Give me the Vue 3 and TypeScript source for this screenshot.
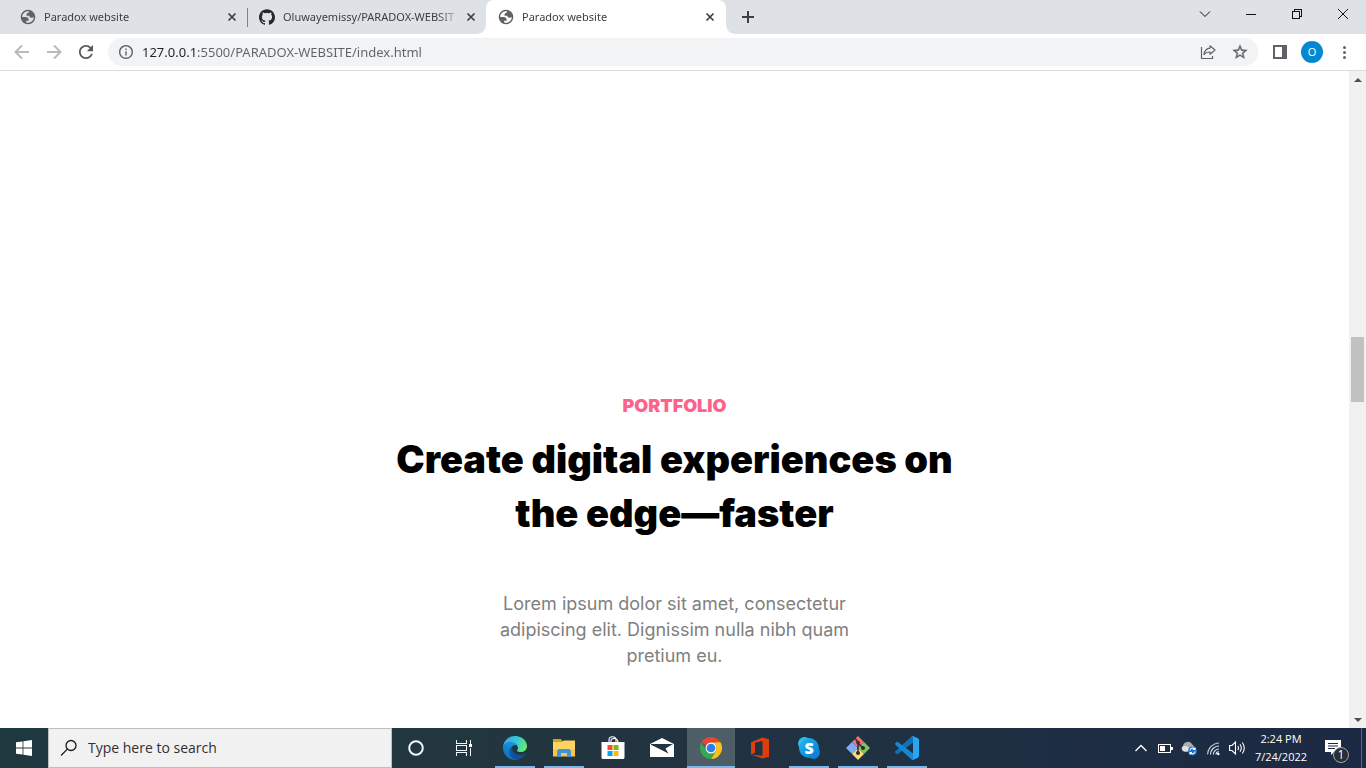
<script setup lang="ts">
import { ref } from 'vue'

interface BrowserTab {
  id: number
  title: string
  icon: 'globe' | 'github'
  active: boolean
}

interface TaskApp {
  id: string
  label: string
  running: boolean
  focused: boolean
}

const tabs: BrowserTab[] = [
  { id: 1, title: 'Paradox website', icon: 'globe', active: false },
  { id: 2, title: 'Oluwayemissy/PARADOX-WEBSIT', icon: 'github', active: false },
  { id: 3, title: 'Paradox website', icon: 'globe', active: true },
]

const apps: TaskApp[] = [
  { id: 'edge', label: 'Microsoft Edge', running: true, focused: false },
  { id: 'files', label: 'File Explorer', running: true, focused: false },
  { id: 'store', label: 'Microsoft Store', running: false, focused: false },
  { id: 'mail', label: 'Mail', running: false, focused: false },
  { id: 'chrome', label: 'Google Chrome', running: true, focused: true },
  { id: 'office', label: 'Office', running: false, focused: false },
  { id: 'skype', label: 'Skype', running: true, focused: false },
  { id: 'git', label: 'Git Bash', running: true, focused: false },
  { id: 'vscode', label: 'Visual Studio Code', running: true, focused: false },
]

const address = ref('127.0.0.1:5500/PARADOX-WEBSITE/index.html')
const query = ref('')
const scroll = { before: 249, thumb: 65, after: 309 }
</script>

<template>
  <div class="desktop">
    <header class="tabstrip">
      <div class="tabs">
        <div v-for="tab in tabs" :key="tab.id" class="tab" :class="{ active: tab.active }">
          <button type="button" class="tab-main">
            <svg v-if="tab.icon === 'globe'" class="favicon" viewBox="1 1 22 22" aria-hidden="true">
              <path fill="#5f6368" fill-rule="evenodd" d="M2 12C2 6.480 6.480 2 12 2s10 4.480 10 10-4.480 10-10 10S2 17.520 2 12zm2 0h4.400c3.407.022 4.922 1.730 4.543 5.127H9.488v2.470a8.004 8.004 0 0 0 10.498-8.083C19.327 12.504 18.332 13 17 13c-2.137 0-3.206-.916-3.206-2.750h-3.748c-.274-2.728.683-4.092 2.870-4.092 0-.975.327-1.597.811-1.970A8.004 8.004 0 0 0 4 12z" />
            </svg>
            <svg v-else class="favicon" viewBox="0 0 24 24" aria-hidden="true">
              <path fill="#24292f" d="M12 .297c-6.630 0-12 5.373-12 12 0 5.303 3.438 9.800 8.205 11.385.6.113.82-.258.82-.577 0-.285-.01-1.040-.015-2.040-3.338.724-4.042-1.610-4.042-1.610C4.422 18.070 3.633 17.700 3.633 17.700c-1.087-.744.084-.729.084-.729 1.205.084 1.838 1.236 1.838 1.236 1.070 1.835 2.809 1.305 3.495.998.108-.776.417-1.305.76-1.605-2.665-.3-5.466-1.332-5.466-5.930 0-1.310.465-2.380 1.235-3.220-.135-.303-.54-1.523.105-3.176 0 0 1.005-.322 3.300 1.230.96-.267 1.980-.399 3-.405 1.020.006 2.040.138 3 .405 2.280-1.552 3.285-1.230 3.285-1.230.645 1.653.24 2.873.12 3.176.765.84 1.230 1.910 1.230 3.220 0 4.610-2.805 5.625-5.475 5.920.42.36.81 1.096.81 2.220 0 1.606-.015 2.896-.015 3.286 0 .315.21.69.825.57C20.565 22.092 24 17.592 24 12.297c0-6.627-5.373-12-12-12" />
            </svg>
            <span class="tab-title">{{ tab.title }}</span>
          </button>
          <button type="button" class="tab-close" aria-label="Close tab">
            <svg viewBox="0 0 16 16" width="16" height="16"><path d="M4.500 4.500l7 7M11.500 4.500l-7 7" stroke="#3c4043" stroke-width="1.700" /></svg>
          </button>
        </div>
        <button type="button" class="new-tab" aria-label="New tab">
          <svg viewBox="0 0 16 16" width="16" height="16"><path d="M8 2v12M2 8h12" stroke="#3c4043" stroke-width="2" /></svg>
        </button>
      </div>
      <div class="window-controls">
        <button type="button" aria-label="Search tabs">
          <svg viewBox="0 0 12 12"><path d="M1 3.500l5 5 5-5" /></svg>
        </button>
        <button type="button" aria-label="Minimize">
          <svg viewBox="0 0 12 12" shape-rendering="crispEdges"><path d="M1 6.500h10" /></svg>
        </button>
        <button type="button" aria-label="Restore">
          <svg viewBox="0 0 12 12" shape-rendering="crispEdges"><path d="M1.500 3.500h7v7h-7zM3.500 3.500v-2h7v7h-2" /></svg>
        </button>
        <button type="button" aria-label="Close window">
          <svg viewBox="0 0 12 12"><path d="M1 1l10 10M11 1L1 11" /></svg>
        </button>
      </div>
    </header>

    <nav class="toolbar" aria-label="Browser toolbar">
      <button type="button" class="tool" aria-label="Back">
        <svg viewBox="0 0 16 16" width="16" height="16" class="faint"><path d="M15 8H2M8 1.500L1.500 8 8 14.500" /></svg>
      </button>
      <button type="button" class="tool" aria-label="Forward">
        <svg viewBox="0 0 16 16" width="16" height="16" class="faint"><path d="M1 8h13M8 1.500L14.500 8 8 14.500" /></svg>
      </button>
      <button type="button" class="tool" aria-label="Reload">
        <svg viewBox="4 4 16 16" width="14" height="14"><path fill="#55585c" d="M17.650 6.350C16.200 4.900 14.210 4 12 4c-4.420 0-7.990 3.580-7.990 8s3.570 8 7.990 8c3.730 0 6.840-2.550 7.730-6h-2.080c-.82 2.330-3.040 4-5.650 4-3.310 0-6-2.690-6-6s2.690-6 6-6c1.660 0 3.140.69 4.220 1.780L13 11h7V4l-2.350 2.350z" /></svg>
      </button>
      <div class="omnibox">
        <button type="button" class="site-info" aria-label="View site information">
          <svg viewBox="2 2 20 20" width="14" height="14"><path fill="#5f6368" d="M11 7h2v2h-2zm0 4h2v6h-2zm1-9C6.480 2 2 6.480 2 12s4.480 10 10 10 10-4.480 10-10S17.520 2 12 2zm0 18c-4.410 0-8-3.590-8-8s3.590-8 8-8 8 3.590 8 8-3.590 8-8 8z" /></svg>
        </button>
        <input v-model="address" class="address" type="text" aria-label="Address" spellcheck="false" />
        <button type="button" class="tool" aria-label="Share this page">
          <svg viewBox="0 0 16 16" width="16" height="16" fill="none" stroke="#5f6368"><path d="M1.500 3v11.500h11V12" stroke-width="1.200" /><path d="M10 1.800l5 4.200-5 4.200V8C7.500 7.900 5.500 8.700 4 10.600C4.500 7 6.500 4.400 10 4.100z" stroke-width="1.200" stroke-linejoin="round" /></svg>
        </button>
        <button type="button" class="tool" aria-label="Bookmark this tab">
          <svg viewBox="1 1 22 22" width="16" height="16"><path fill="#5f6368" stroke="#5f6368" stroke-width=".5" d="M22 9.240l-7.190-.62L12 2 9.190 8.630 2 9.240l5.460 4.730L5.820 21 12 17.270 18.180 21l-1.630-7.030L22 9.240zM12 15.400l-3.760 2.270 1-4.280-3.320-2.880 4.380-.38L12 6.100l1.710 4.040 4.380.38-3.320 2.880 1 4.280L12 15.400z" /></svg>
        </button>
      </div>
      <button type="button" class="tool" aria-label="Side panel">
        <svg viewBox="0 0 14 14" width="14" height="14" shape-rendering="crispEdges"><path fill="#5f6368" fill-rule="evenodd" d="M0 0h14v14H0zM2 2v10h7V2z" /></svg>
      </button>
      <button type="button" class="tool" aria-label="Profile">
        <span class="avatar">O</span>
      </button>
      <button type="button" class="tool" aria-label="Menu">
        <svg viewBox="0 0 16 16" width="16" height="16" fill="#5f6368"><circle cx="8.500" cy="3.500" r="1.500" /><circle cx="8.500" cy="8.500" r="1.500" /><circle cx="8.500" cy="13.500" r="1.500" /></svg>
      </button>
    </nav>

    <div class="viewport">
      <main class="page">
        <section class="portfolio">
          <p class="eyebrow">PORTFOLIO</p>
          <h1>Create digital experiences on the edge—faster</h1>
          <p class="lead">Lorem ipsum dolor sit amet, consectetur adipiscing elit. Dignissim nulla nibh quam pretium eu.</p>
        </section>
      </main>
      <div class="scrollbar">
        <button type="button" class="scroll-arrow" aria-label="Scroll up">
          <svg viewBox="0 0 8 4" width="8" height="4"><path d="M0 4l4-4 4 4z" fill="#505050" /></svg>
        </button>
        <div :style="{ flexGrow: scroll.before }"></div>
        <div class="thumb" :style="{ flexGrow: scroll.thumb }"></div>
        <div :style="{ flexGrow: scroll.after }"></div>
        <button type="button" class="scroll-arrow" aria-label="Scroll down">
          <svg viewBox="0 0 8 4" width="8" height="4"><path d="M0 0l4 4 4-4z" fill="#505050" /></svg>
        </button>
      </div>
    </div>

    <footer class="taskbar">
      <button type="button" class="task" aria-label="Start">
        <svg viewBox="0 0 16 16" width="16" height="16" fill="#fff"><path d="M0 2.300l6.600-.9v6.200H0zM7.400 1.300L16 0v7.600H7.400zM0 8.400h6.600v6.200L0 13.700zM7.400 8.400H16V16l-8.600-1.300z" /></svg>
      </button>
      <label class="search">
        <svg viewBox="0 0 18 18" width="18" height="18" fill="none" stroke="#1b1b1b" stroke-width="1.300"><circle cx="11" cy="6.500" r="5" /><path d="M7.400 10.100L1 16.500" /></svg>
        <input v-model="query" type="text" placeholder="Type here to search" aria-label="Type here to search" />
      </label>
      <button type="button" class="task" aria-label="Cortana">
        <svg viewBox="0 0 16 16" width="16" height="16"><circle cx="8" cy="8" r="6.800" fill="none" stroke="#f4f6f7" stroke-width="2" /></svg>
      </button>
      <button type="button" class="task" aria-label="Task View">
        <svg viewBox="0 0 16 16" width="16" height="16" fill="none" stroke="#f4f6f7" shape-rendering="crispEdges"><path d="M.5 0v3.500h10V0M.5 16v-3.500h10V16M.5 5.500h10v5H.5zM14.500 0v4M14.500 8v8" /><path d="M13 4h3v3h-3z" fill="#fff" stroke="none" /></svg>
      </button>

      <div class="apps">
        <button v-for="app in apps" :key="app.id" type="button" class="task app" :class="{ running: app.running, focused: app.focused }" :aria-label="app.label">
          <svg v-if="app.id === 'edge'" viewBox="0 0 256 256" width="24" height="24">
            <defs>
              <linearGradient id="edgeDeep" x1="0" x2="1"><stop offset="0" stop-color="#0c59a4" /><stop offset="1" stop-color="#114a8b" /></linearGradient>
              <linearGradient id="edgeMid" x1=".7" y1="0" x2=".3" y2="1"><stop offset="0" stop-color="#1b9de2" /><stop offset=".5" stop-color="#1482cf" /><stop offset="1" stop-color="#0872c4" /></linearGradient>
              <linearGradient id="edgeTop" x1="0" y1=".3" x2="1" y2=".6"><stop offset="0" stop-color="#35a8ec" /><stop offset=".5" stop-color="#36c5d8" /><stop offset="1" stop-color="#66eb6e" /></linearGradient>
            </defs>
            <path fill="url(#edgeDeep)" d="M231 190.500c-3.400 1.800-6.900 3.400-10.500 4.700-11.500 4.300-23.600 6.500-35.900 6.500-47.300 0-88.500-32.500-88.500-74.300.1-11.400 6.400-21.900 16.400-27.300-42.800 1.800-53.800 46.400-53.800 72.500 0 73.900 68.100 81.400 82.800 81.400 7.900 0 19.800-2.300 27-4.600l1.300-.4c27.600-9.500 51-28.100 66.600-52.800 1.200-1.900.6-4.300-1.200-5.500-1.300-.8-2.900-.9-4.200-.2z" />
            <path fill="url(#edgeMid)" d="M105.700 241.400c-8.900-5.500-16.600-12.800-22.700-21.300-26.300-36-18.400-86.500 17.600-112.800 3.800-2.700 7.700-5.200 11.900-7.200 3.100-1.500 8.400-4.100 15.500-4 10.100.1 19.600 4.900 25.700 13 4 5.400 6.300 11.900 6.400 18.700 0-.2 24.500-79.600-80-79.600-43.900 0-80 41.700-80 78.200-.2 19.300 4 38.500 12.100 56 27.600 58.800 94.800 87.600 156.400 67.100-21.100 6.600-44.100 3.700-62.900-8.100z" />
            <path fill="url(#edgeTop)" d="M152.300 148.900c-.8 1-3.300 2.500-3.300 5.700 0 2.600 1.700 5.100 4.700 7.200 14.400 10 41.500 8.700 41.600 8.700 10.700 0 21.100-2.900 30.300-8.300 18.800-11 30.400-31.100 30.400-52.900.3-22.400-8-37.300-11.300-43.900C223.500 23.900 177.700 0 128 0 58 0 1 56.200 0 126.200c.5-36.500 36.800-66 80-66 3.500 0 23.500.3 42 10.100 16.300 8.600 24.900 18.900 30.800 29.200 6.200 10.700 7.300 24.100 7.300 29.500 0 5.300-2.700 13.300-7.800 19.900z" />
          </svg>
          <svg v-else-if="app.id === 'files'" viewBox="0 0 24 24" width="24" height="24">
            <path d="M1 3h8l1 2h13v4H1z" fill="#e19c12" />
            <path d="M1 6h9l1.500-1.500H23V20H1z" fill="#fcd462" />
            <path d="M1 13h22v7.500H1z" fill="#f8c545" />
            <path d="M5 21v-6l1.500-2h11l1.500 2v6h-4v-4H9v4z" fill="#3f93dc" />
          </svg>
          <svg v-else-if="app.id === 'store'" viewBox="0 0 24 24" width="24" height="24">
            <path d="M8 6.500V4.200Q8 .8 11.500.8Q15 .8 15 4.200V6.500M10 6.500V4.600Q10 2.500 13 2.500Q17 2.500 17 6.500" fill="none" stroke="#fff" stroke-width="1.100" />
            <path d="M.5 6h23v15.500q0 1.500-1.500 1.500H2Q.5 23 .5 21.500z" fill="#fff" />
            <path d="M6.500 9h5v5h-5z" fill="#f25022" /><path d="M12.500 9h5v5h-5z" fill="#7fba00" /><path d="M6.500 15h5v5h-5z" fill="#00a4ef" /><path d="M12.500 15h5v5h-5z" fill="#ffb900" />
          </svg>
          <svg v-else-if="app.id === 'mail'" viewBox="0 0 24 24" width="24" height="24">
            <path d="M0 8L12 2l12 6v13H0z" fill="#fff" />
            <path d="M1 8h22l-7.500 4.500 3 5L1 8.800z" fill="#21343f" />
          </svg>
          <svg v-else-if="app.id === 'chrome'" viewBox="0 0 48 48" width="22" height="22">
            <path d="M24 0a24 24 0 0 1 20.800 12H24a12 12 0 0 0-10.400 6L3.200 12A24 24 0 0 1 24 0z" fill="#ea4335" />
            <path d="M44.800 12A24 24 0 0 1 24 48l10.400-18A12 12 0 0 0 34.400 18L33 12z" fill="#fbc116" />
            <path d="M3.200 12A24 24 0 0 0 24 48l10.400-18a12 12 0 0 1-20.800 0z" fill="#34a853" />
            <path d="M24 12h20.800A24 24 0 0 1 46.600 16H30z" fill="#fbc116" />
            <circle cx="24" cy="24" r="12" fill="#fff" /><circle cx="24" cy="24" r="9.500" fill="#2f7de9" />
          </svg>
          <svg v-else-if="app.id === 'office'" viewBox="0 0 24 24" width="24" height="24">
            <path d="M3 6.200L14.500 1.500 21 3.300v17.400L14.500 22.500 3 18.500l11.500 1.300V5L7 6.800v10L3 18.500z" fill="#dc3e10" />
          </svg>
          <svg v-else-if="app.id === 'skype'" viewBox="0 0 24 24" width="24" height="24">
            <defs><linearGradient id="skypeBlue" x1="0" x2="1" y1="0" y2="1"><stop offset="0" stop-color="#28b9f0" /><stop offset="1" stop-color="#0078d4" /></linearGradient></defs>
            <circle cx="7.500" cy="7.500" r="6.500" fill="#35bdf2" /><circle cx="16.500" cy="16.500" r="6.500" fill="#0a82dc" />
            <circle cx="12" cy="12" r="10" fill="url(#skypeBlue)" />
            <text x="12" y="17.500" text-anchor="middle" class="skype-letter">S</text>
          </svg>
          <svg v-else-if="app.id === 'git'" viewBox="0 0 24 24" width="24" height="24">
            <path d="M12 0l6 6-6 6-6-6z" fill="#f1707a" /><path d="M18 6l6 6-6 6-6-6z" fill="#80c65a" /><path d="M6 6l6 6-6 6-6-6z" fill="#7eaaf6" /><path d="M12 12l6 6-6 6-6-6z" fill="#fbdc70" />
            <path d="M9 2.500l3 3.500v11M12 7l5 5" fill="none" stroke="#2b2f35" stroke-width="1.500" />
            <circle cx="12" cy="6.500" r="1.800" fill="#2b2f35" /><circle cx="12" cy="17" r="2" fill="#2b2f35" /><circle cx="17" cy="12" r="2" fill="#2b2f35" />
          </svg>
          <svg v-else viewBox="0 0 100 100" width="24" height="24">
            <path d="M96.500 10.800L75.900.9c-2.400-1.200-5.200-.7-7.100 1.200L1.300 63.700c-1.800 1.700-1.800 4.500 0 6.200l5.500 5c1.500 1.300 3.700 1.400 5.300.2L93.400 13.400c2.700-2.100 6.600-.1 6.600 3.300v-.3c0-2.400-1.400-4.600-3.500-5.600z" fill="#0f72b9" />
            <path d="M96.500 89.200l-20.600 9.900c-2.400 1.200-5.200.7-7.100-1.200L1.300 36.300c-1.800-1.700-1.800-4.500 0-6.200l5.500-5c1.500-1.300 3.700-1.400 5.300-.2l81.300 61.700c2.700 2.100 6.600.1 6.600-3.300v.3c0 2.400-1.400 4.600-3.500 5.600z" fill="#1787cf" />
            <path d="M75.900 99.100c-2.400 1.200-5.200.7-7.100-1.200 2.300 2.300 6.200.7 6.200-2.600V4.700C75 1.400 71.100-.2 68.800 2.100 70.700.2 73.500-.3 75.900.9l20.600 9.900c2.100 1 3.500 3.200 3.500 5.600v67.200c0 2.400-1.400 4.600-3.500 5.600z" fill="#2aa4f3" />
          </svg>
        </button>
      </div>

      <div class="tray">
        <button type="button" class="tray-item" aria-label="Show hidden icons">
          <svg viewBox="0 0 16 16"><path d="M2.500 11L8 5.500l5.500 5.500" fill="none" stroke="#fff" stroke-width="1.300" /></svg>
        </button>
        <button type="button" class="tray-item" aria-label="Battery">
          <svg viewBox="0 0 16 16" shape-rendering="crispEdges"><path d="M1.500 4.500h12v8h-12z" fill="none" stroke="#fff" /><path d="M3 6h5v5H3zM14 7h2v3h-2z" fill="#fff" /></svg>
        </button>
        <button type="button" class="tray-item" aria-label="OneDrive">
          <svg viewBox="0 0 16 16"><path d="M3 11.500A3 3 0 0 1 2 6A5 5 0 0 1 11 4L14 7.500 10 11.500z" fill="#a9abae" /><path d="M3 11.500A3 3 0 0 1 2 6.500Q6 5 8 8l4-2 2 5.500z" fill="#e1e2e4" /><circle cx="11.500" cy="11" r="4.500" fill="#1673cf" /><path d="M8.800 10.500a2.800 2.800 0 0 1 5-1.200M14.200 11.500a2.800 2.800 0 0 1-5 1.200M14 7.500v2h-2M9 14.500v-2h2" fill="none" stroke="#fff" stroke-width="1.100" /></svg>
        </button>
        <button type="button" class="tray-item" aria-label="Network">
          <svg viewBox="0 0 16 16" fill="none" stroke="#e5e9ee" stroke-width="1.100"><path d="M2.500 14.500A12 12 0 0 1 14 3" opacity=".75" /><path d="M5.500 14.500A8.500 8.500 0 0 1 14 6M8.300 14.500A5.700 5.700 0 0 1 14 9M11 14.500A3 3 0 0 1 14 11.700" /><circle cx="13.300" cy="14" r="1.200" fill="#fff" stroke="none" /></svg>
        </button>
        <button type="button" class="tray-item" aria-label="Volume">
          <svg viewBox="0 0 16 16" fill="none" stroke="#fff" stroke-width="1.100"><path d="M.6 5.500H3l3.500-3.500v12L3 10.500H.6z" /><path d="M8.800 6q1.400 2 0 4M11 4.200q2.600 3.800 0 7.600M13.300 2.500q4 5.500 0 11" /></svg>
        </button>
        <button type="button" class="clock"><time>2:24 PM</time><time>7/24/2022</time></button>
        <button type="button" class="notifications" aria-label="Notifications, 1 new">
          <svg viewBox="0 0 16 16" width="16" height="16"><path d="M0 0h16v12h-7l-3 3v-3H0z" fill="#fff" /><path d="M3 3.500h10M3 6h10M3 8.500h7" stroke="#1b2942" stroke-width="1" /></svg>
          <span class="badge">1</span>
        </button>
        <button type="button" class="show-desktop" aria-label="Show desktop"></button>
      </div>
    </footer>
  </div>
</template>

<style>
html,
body {
  margin: 0;
  overflow: hidden;
}
</style>

<style scoped>
* {
  box-sizing: border-box;
}

button,
input {
  margin: 0;
  padding: 0;
  border: 0;
  background: none;
  font: inherit;
  color: inherit;
}

button {
  display: flex;
  align-items: center;
  justify-content: center;
}

svg {
  display: block;
  flex: none;
}

.desktop {
  display: flex;
  flex-direction: column;
  height: 100vh;
  background: #fff;
  font-family: "Open Sans", "Noto Sans", sans-serif;
}

.tabstrip {
  display: flex;
  flex: none;
  justify-content: space-between;
  height: 34px;
  padding-left: 8px;
  background: #dee1e6;
}

.tabs {
  display: flex;
}

.tab {
  position: relative;
  display: flex;
  align-items: center;
  width: 239px;
  padding: 0 7px 0 12px;
}

.tab:first-child::after {
  content: "";
  position: absolute;
  top: 8px;
  right: -1px;
  width: 1px;
  height: 19px;
  background: #808387;
}

.tab.active {
  width: 240px;
  padding-right: 8px;
  border-radius: 8px 8px 0 0;
  background: #fff;
}

.tab.active::before,
.tab.active::after {
  content: "";
  position: absolute;
  bottom: 0;
  width: 8px;
  height: 8px;
}

.tab.active::before {
  left: -8px;
  background: radial-gradient(circle at 0 0, #dee1e6 7px, #fff 8px);
}

.tab.active::after {
  right: -8px;
  background: radial-gradient(circle at 100% 0, #dee1e6 7px, #fff 8px);
}

.tab-main {
  flex: 1;
  gap: 8px;
  min-width: 0;
  justify-content: flex-start;
}

.favicon {
  width: 16px;
  height: 16px;
}

.tab-title {
  flex: 1;
  overflow: hidden;
  font-family: "Noto Sans", sans-serif;
  font-size: 11px;
  line-height: 16px;
  color: #3c4043;
  text-align: left;
  white-space: nowrap;
  mask-image: linear-gradient(90deg, #000 calc(100% - 24px), transparent);
}

.tab-close {
  width: 16px;
  height: 16px;
  margin-left: 2px;
}

.new-tab {
  width: 44px;
}

.window-controls {
  display: flex;
  height: 28px;
}

.window-controls button {
  width: 46px;
}

.window-controls svg {
  width: 12px;
  height: 12px;
  fill: none;
  stroke: #111;
  stroke-width: 1;
}

.toolbar {
  display: flex;
  flex: none;
  align-items: center;
  height: 37px;
  padding: 0 6px;
  border-bottom: 1px solid #d9dbde;
}

.tool {
  width: 32px;
  height: 28px;
}

.faint {
  fill: none;
  stroke: #b9bbbe;
  stroke-width: 2;
}

.omnibox {
  display: flex;
  flex: 1;
  align-items: center;
  height: 28px;
  margin: 0 6px;
  padding: 0 2px 0 8px;
  border-radius: 14px;
  background: #f1f3f4;
}

.site-info {
  width: 20px;
  height: 20px;
}

.address {
  flex: 1;
  min-width: 0;
  height: 20px;
  margin-left: 6px;
  font-family: "Noto Sans", sans-serif;
  font-size: 13px;
  line-height: 20px;
  color: transparent;
  background: linear-gradient(90deg, #202124 55px, #5f6368 55px);
  background-clip: text;
  -webkit-background-clip: text;
}

.avatar {
  width: 22px;
  height: 22px;
  border-radius: 50%;
  background: #0288d1;
  font-size: 11px;
  line-height: 22px;
  color: #fff;
}

.viewport {
  display: flex;
  flex: 1;
  min-height: 0;
}

.page {
  flex: 1;
  overflow: hidden;
}

.portfolio {
  display: flex;
  flex-direction: column;
  align-items: center;
  padding-top: 324px;
  font-family: Inter, "Noto Sans", sans-serif;
  text-align: center;
}

.portfolio p,
.portfolio h1 {
  margin: 0;
}

.eyebrow {
  font-size: 18px;
  font-weight: 900;
  line-height: 22px;
  color: #ff6289;
}

.portfolio h1 {
  max-width: 600px;
  margin-top: 15px;
  font-size: 38px;
  font-weight: 900;
  line-height: 54px;
  color: #000;
}

.portfolio .lead {
  max-width: 380px;
  margin-top: 51px;
  font-size: 18px;
  line-height: 26px;
  color: #808080;
}

.scrollbar {
  display: flex;
  flex: none;
  flex-direction: column;
  width: 17px;
  background: #f1f1f1;
}

.scroll-arrow {
  flex: none;
  width: 17px;
  height: 17px;
}

.thumb {
  margin: 0 2px;
  background: #c1c1c1;
}

.taskbar {
  display: flex;
  flex: none;
  height: 40px;
  background: linear-gradient(90deg, #1e3840, #22363f 35%, #203142 65%, #1b2942);
  color: #fff;
}

.task {
  width: 48px;
}

.search {
  display: flex;
  align-items: center;
  width: 344px;
  padding: 0 11px;
  gap: 10px;
  border: 1px solid #bfbfbf;
  background: #f1f1f1;
}

.search input {
  flex: 1;
  min-width: 0;
  font-size: 14px;
  line-height: 20px;
  color: #222;
}

.search input::placeholder {
  color: #303030;
  opacity: 1;
}

.apps {
  display: flex;
  gap: 1px;
  margin-left: 3px;
}

.app {
  position: relative;
}

.app.focused {
  background: #4e5e66;
}

.app.running::after {
  content: "";
  position: absolute;
  right: 4px;
  bottom: 0;
  left: 4px;
  height: 2px;
  background: #76b9ed;
}

.app.focused::after {
  right: 0;
  left: 0;
}

.skype-letter {
  fill: #fff;
  font-family: "Open Sans", sans-serif;
  font-size: 16px;
  font-weight: 800;
}

.tray {
  display: flex;
  margin-left: auto;
}

.tray-item {
  width: 24px;
}

.tray-item svg {
  width: 16px;
  height: 16px;
}

.clock {
  flex-direction: column;
  width: 64px;
  font-size: 11px;
  line-height: 18px;
}

.notifications {
  position: relative;
  width: 48px;
  padding-right: 8px;
}

.badge {
  position: absolute;
  top: 19px;
  left: 20px;
  width: 16px;
  height: 16px;
  border: 1px solid #a4a7aa;
  border-radius: 50%;
  background: #2b2f33;
  font-size: 12px;
  line-height: 14px;
}

.show-desktop {
  width: 5px;
  border-left: 1px solid #5c6779;
}
</style>
